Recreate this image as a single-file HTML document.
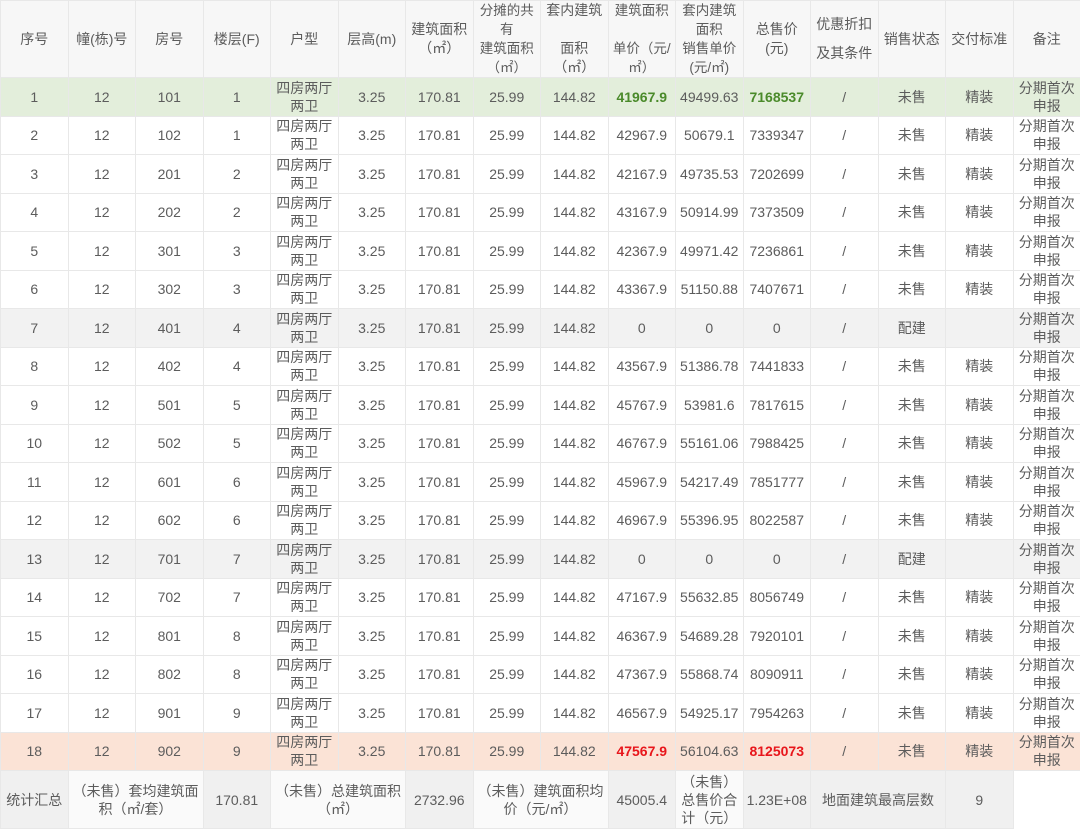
<!DOCTYPE html>
<html><head><meta charset="utf-8"><style>
*{margin:0;padding:0;box-sizing:border-box}
body{width:1080px;height:828px;overflow:hidden;background:#fff;font-family:"Liberation Sans","Noto Sans CJK SC",sans-serif;color:#5c5c5c;font-size:14px}
table{border-collapse:collapse;table-layout:fixed;width:1080px}
td{border:1px solid #e8e8e8;text-align:center;vertical-align:middle;height:38.5px;line-height:18px;overflow:hidden;padding:0}
tr.h td{height:77px;background:#f7f7f7;line-height:19px}
.hx{font-size:13.5px;line-height:17px}
tr.g td{background:#e3eedb}
tr.o td{background:#fbe3d6}
tr.y td{background:#f2f2f2}
.sg{color:#4a8a2a;font-weight:bold}
.sr{color:#e8161b;font-weight:bold}
tr.s td{height:58px;background:#fafafa}
tr.s td.k{background:#f0f0f0}
</style></head><body>
<table>
<colgroup><col span="16" style="width:67.5px"></colgroup>
<tr class="h"><td>序号</td><td>幢(栋)号</td><td>房号</td><td>楼层(F)</td><td>户型</td><td>层高(m)</td><td>建筑面积<br>（㎡）</td><td class="hx">分摊的共<br>有<br>建筑面积<br>（㎡）</td><td>套内建筑<br><br>面积<br>（㎡）</td><td class="hx">建筑面积<br><br>单价（元/<br>㎡）</td><td class="hx">套内建筑<br>面积<br>销售单价<br>(元/㎡)</td><td>总售价<br>(元)</td><td style="line-height:29px">优惠折扣<br>及其条件</td><td>销售状态</td><td>交付标准</td><td>备注</td></tr>
<tr class="g"><td>1</td><td>12</td><td>101</td><td>1</td><td>四房两厅<br>两卫</td><td>3.25</td><td>170.81</td><td>25.99</td><td>144.82</td><td class="sg">41967.9</td><td>49499.63</td><td class="sg">7168537</td><td>/</td><td>未售</td><td>精装</td><td>分期首次<br>申报</td></tr>
<tr><td>2</td><td>12</td><td>102</td><td>1</td><td>四房两厅<br>两卫</td><td>3.25</td><td>170.81</td><td>25.99</td><td>144.82</td><td>42967.9</td><td>50679.1</td><td>7339347</td><td>/</td><td>未售</td><td>精装</td><td>分期首次<br>申报</td></tr>
<tr><td>3</td><td>12</td><td>201</td><td>2</td><td>四房两厅<br>两卫</td><td>3.25</td><td>170.81</td><td>25.99</td><td>144.82</td><td>42167.9</td><td>49735.53</td><td>7202699</td><td>/</td><td>未售</td><td>精装</td><td>分期首次<br>申报</td></tr>
<tr><td>4</td><td>12</td><td>202</td><td>2</td><td>四房两厅<br>两卫</td><td>3.25</td><td>170.81</td><td>25.99</td><td>144.82</td><td>43167.9</td><td>50914.99</td><td>7373509</td><td>/</td><td>未售</td><td>精装</td><td>分期首次<br>申报</td></tr>
<tr><td>5</td><td>12</td><td>301</td><td>3</td><td>四房两厅<br>两卫</td><td>3.25</td><td>170.81</td><td>25.99</td><td>144.82</td><td>42367.9</td><td>49971.42</td><td>7236861</td><td>/</td><td>未售</td><td>精装</td><td>分期首次<br>申报</td></tr>
<tr><td>6</td><td>12</td><td>302</td><td>3</td><td>四房两厅<br>两卫</td><td>3.25</td><td>170.81</td><td>25.99</td><td>144.82</td><td>43367.9</td><td>51150.88</td><td>7407671</td><td>/</td><td>未售</td><td>精装</td><td>分期首次<br>申报</td></tr>
<tr class="y"><td>7</td><td>12</td><td>401</td><td>4</td><td>四房两厅<br>两卫</td><td>3.25</td><td>170.81</td><td>25.99</td><td>144.82</td><td>0</td><td>0</td><td>0</td><td>/</td><td>配建</td><td></td><td>分期首次<br>申报</td></tr>
<tr><td>8</td><td>12</td><td>402</td><td>4</td><td>四房两厅<br>两卫</td><td>3.25</td><td>170.81</td><td>25.99</td><td>144.82</td><td>43567.9</td><td>51386.78</td><td>7441833</td><td>/</td><td>未售</td><td>精装</td><td>分期首次<br>申报</td></tr>
<tr><td>9</td><td>12</td><td>501</td><td>5</td><td>四房两厅<br>两卫</td><td>3.25</td><td>170.81</td><td>25.99</td><td>144.82</td><td>45767.9</td><td>53981.6</td><td>7817615</td><td>/</td><td>未售</td><td>精装</td><td>分期首次<br>申报</td></tr>
<tr><td>10</td><td>12</td><td>502</td><td>5</td><td>四房两厅<br>两卫</td><td>3.25</td><td>170.81</td><td>25.99</td><td>144.82</td><td>46767.9</td><td>55161.06</td><td>7988425</td><td>/</td><td>未售</td><td>精装</td><td>分期首次<br>申报</td></tr>
<tr><td>11</td><td>12</td><td>601</td><td>6</td><td>四房两厅<br>两卫</td><td>3.25</td><td>170.81</td><td>25.99</td><td>144.82</td><td>45967.9</td><td>54217.49</td><td>7851777</td><td>/</td><td>未售</td><td>精装</td><td>分期首次<br>申报</td></tr>
<tr><td>12</td><td>12</td><td>602</td><td>6</td><td>四房两厅<br>两卫</td><td>3.25</td><td>170.81</td><td>25.99</td><td>144.82</td><td>46967.9</td><td>55396.95</td><td>8022587</td><td>/</td><td>未售</td><td>精装</td><td>分期首次<br>申报</td></tr>
<tr class="y"><td>13</td><td>12</td><td>701</td><td>7</td><td>四房两厅<br>两卫</td><td>3.25</td><td>170.81</td><td>25.99</td><td>144.82</td><td>0</td><td>0</td><td>0</td><td>/</td><td>配建</td><td></td><td>分期首次<br>申报</td></tr>
<tr><td>14</td><td>12</td><td>702</td><td>7</td><td>四房两厅<br>两卫</td><td>3.25</td><td>170.81</td><td>25.99</td><td>144.82</td><td>47167.9</td><td>55632.85</td><td>8056749</td><td>/</td><td>未售</td><td>精装</td><td>分期首次<br>申报</td></tr>
<tr><td>15</td><td>12</td><td>801</td><td>8</td><td>四房两厅<br>两卫</td><td>3.25</td><td>170.81</td><td>25.99</td><td>144.82</td><td>46367.9</td><td>54689.28</td><td>7920101</td><td>/</td><td>未售</td><td>精装</td><td>分期首次<br>申报</td></tr>
<tr><td>16</td><td>12</td><td>802</td><td>8</td><td>四房两厅<br>两卫</td><td>3.25</td><td>170.81</td><td>25.99</td><td>144.82</td><td>47367.9</td><td>55868.74</td><td>8090911</td><td>/</td><td>未售</td><td>精装</td><td>分期首次<br>申报</td></tr>
<tr><td>17</td><td>12</td><td>901</td><td>9</td><td>四房两厅<br>两卫</td><td>3.25</td><td>170.81</td><td>25.99</td><td>144.82</td><td>46567.9</td><td>54925.17</td><td>7954263</td><td>/</td><td>未售</td><td>精装</td><td>分期首次<br>申报</td></tr>
<tr class="o"><td>18</td><td>12</td><td>902</td><td>9</td><td>四房两厅<br>两卫</td><td>3.25</td><td>170.81</td><td>25.99</td><td>144.82</td><td class="sr">47567.9</td><td>56104.63</td><td class="sr">8125073</td><td>/</td><td>未售</td><td>精装</td><td>分期首次<br>申报</td></tr>
<tr class="s"><td class="k">统计汇总</td><td colspan="2">（未售）套均建筑面积（㎡/套）</td><td class="k">170.81</td><td colspan="2">（未售）总建筑面积（㎡）</td><td class="k">2732.96</td><td colspan="2">（未售）建筑面积均价（元/㎡）</td><td class="k">45005.4</td><td>（未售）<br>总售价合<br>计（元）</td><td class="k">1.23E+08</td><td colspan="2" class="k">地面建筑最高层数</td><td class="k">9</td><td style="background:#fff;border-bottom:none;border-right:none"></td></tr>
</table>
</body></html>
